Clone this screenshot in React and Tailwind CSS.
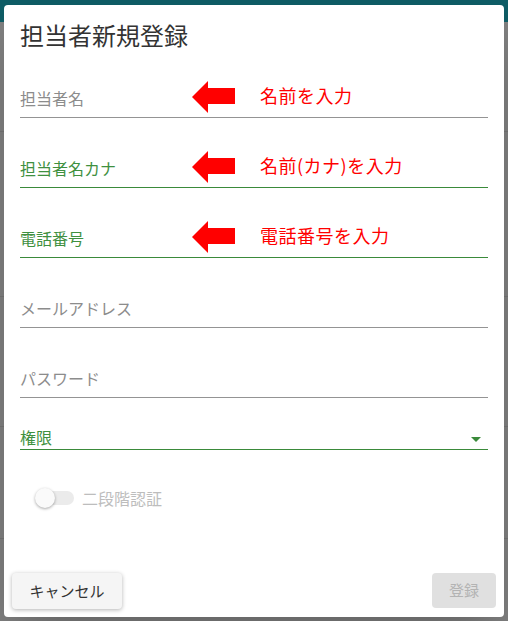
import React from "react";

function Arrow() {
  return (
    <svg width="43" height="32" viewBox="0 0 43 32" className="shrink-0">
      <polygon points="0,16 16,0 16,7 43,7 43,23 16,23 16,32" fill="#ff0000" />
    </svg>
  );
}

function Field({ label, green, note }) {
  return (
    <div
      className={`relative h-[70px] flex items-end border-b ${
        green ? "border-[#3a8a3a]" : "border-[#949494]"
      }`}
    >
      <span
        className={`text-[16px] leading-6 pb-[7px] ${
          green ? "text-[#3f903f]" : "text-[#8c8c8c]"
        }`}
      >
        {label}
      </span>
      {note && (
        <div className="absolute left-[172px] top-[33px] h-[32px] flex items-center">
          <Arrow />
          <span className="ml-[25px] pb-[4px] text-[18px] leading-[18px] tracking-[0.5px] text-[#ff0000] whitespace-nowrap">
            {note}
          </span>
        </div>
      )}
    </div>
  );
}

export default function App() {
  return (
    <div className="relative w-[508px] h-[621px] overflow-hidden bg-[#808080] font-['Noto_Sans_CJK_JP',sans-serif]">
      {/* page behind the overlay */}
      <div className="h-[22px] bg-[#0f5d66]"></div>
      <div className="h-[110px] border-b border-[#747474]"></div>
      <div className="h-[165px] border-b border-[#747474]"></div>
      <div className="h-[130px] border-b border-[#747474]"></div>
      <div className="h-[112px] border-b border-[#747474]"></div>

      {/* dialog */}
      <div className="absolute left-[4px] top-[5px] w-[500px] h-[612px] bg-white rounded-[4px] shadow-2xl flex flex-col">
        <h2 className="px-4 pt-[18px] text-[24px] leading-6 font-normal text-[#333]">
          担当者新規登録
        </h2>

        <div className="px-4 mt-[1px]">
          <Field label="担当者名" note="名前を入力" />
          <Field label="担当者名カナ" green note="名前(カナ)を入力" />
          <Field label="電話番号" green note="電話番号を入力" />
          <Field label="メールアドレス" />
          <Field label="パスワード" />
          <div className="h-[52px] flex items-end justify-between border-b border-[#3a8a3a]">
            <span className="text-[16px] leading-6 text-[#3f903f]">権限</span>
            <svg width="10" height="5" viewBox="0 0 10 5" className="mb-[7px] mr-[7px]">
              <polygon points="0,0 10,0 5,5" fill="#3a8a3a" />
            </svg>
          </div>

          <div className="mt-[38px] pl-[15px] flex items-center h-[20px]">
            <div className="relative w-[39px] h-[20px] shrink-0">
              <div className="absolute left-[5px] top-[3px] w-[34px] h-[14px] rounded-full bg-[#ebebeb]"></div>
              <div className="absolute left-0 top-0 w-5 h-5 rounded-full bg-[#fafafa] shadow-[0_1px_3px_rgba(0,0,0,0.35)]"></div>
            </div>
            <span className="ml-[8px] text-[16px] leading-5 text-[#bdbdbd]">二段階認証</span>
          </div>
        </div>

        <div className="mt-auto p-2 flex items-start justify-between">
          <button className="w-[110px] h-[36px] rounded-[4px] bg-[#f5f5f5] text-[15px] text-[#333] shadow-[0_1px_4px_rgba(0,0,0,0.3)]">
            キャンセル
          </button>
          <button className="w-[64px] h-[35px] rounded-[4px] bg-[#e0e0e0] text-[15px] text-[#b3b3b3]">
            登録
          </button>
        </div>
      </div>
    </div>
  );
}
